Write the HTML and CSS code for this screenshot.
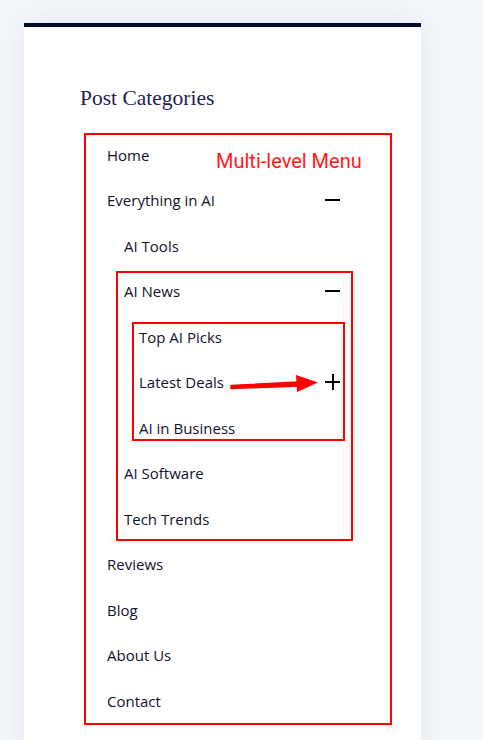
FILE: index.html
```html
<!DOCTYPE html>
<html lang="en">
<head>
<meta charset="utf-8">
<title>Post Categories</title>
<link rel="stylesheet" href="styles.css">
</head>
<body>
<div class="card">
  <h2 class="title">Post Categories</h2>
  <nav class="menu-wrap">
    <span class="note">Multi-level Menu</span>
    <ul class="menu">
      <li><div class="row">Home</div></li>
      <li>
        <div class="row">Everything in AI<span class="toggle minus"></span></div>
        <ul class="sub lvl2">
          <li><div class="row">AI Tools</div></li>
          <li class="boxed-a">
            <div class="row">AI News<span class="toggle minus"></span></div>
            <ul class="sub lvl3 boxed-b">
              <li><div class="row">Top AI Picks</div></li>
              <li>
                <div class="row">Latest Deals<span class="toggle plus"></span></div>
                <svg class="arrow" width="92" height="22" viewBox="0 0 92 22">
                  <path d="M2 13.5 L70 10 L70 14 L2 16.5 Z" fill="#ff0000" stroke="#ff0000" stroke-width="1.5" stroke-linejoin="round"/>
                  <path d="M67 3 L89 10.5 L68 20 Z" fill="#ff0000"/>
                </svg>
              </li>
              <li><div class="row">AI in Business</div></li>
            </ul>
            <ul class="sub lvl2b">
              <li><div class="row">AI Software</div></li>
              <li><div class="row">Tech Trends</div></li>
            </ul>
          </li>
        </ul>
      </li>
      <li><div class="row">Reviews</div></li>
      <li><div class="row">Blog</div></li>
      <li><div class="row">About Us</div></li>
      <li><div class="row">Contact</div></li>
    </ul>
  </nav>
</div>
</body>
</html>
```

FILE: styles.css
```css
html, body {
  margin: 0;
  padding: 0;
  background: #f4f7fb;
}

body {
  padding: 23px 0 0 24px;
  height: 740px;
  box-sizing: border-box;
  overflow: hidden;
}

.card {
  width: 397px;
  min-height: 760px;
  background: #ffffff;
  border-top: 4px solid #030a2b;
  box-shadow: 0 0 30px rgba(20, 40, 80, 0.07);
  padding: 59px 29px 0 56px;
  box-sizing: border-box;
}

.title {
  margin: 0 0 22px 0;
  font-family: "Liberation Serif", "DejaVu Serif", serif;
  font-weight: normal;
  font-size: 21.5px;
  line-height: 25px;
  color: #24214f;
}

.menu-wrap {
  position: relative;
  margin-left: 4px;
  width: 308px;
}

.menu {
  list-style: none;
  margin: 0;
  padding: 0;
  outline: 2px solid #ff0000;
  outline-offset: -2px;
}

.sub {
  list-style: none;
  margin: 0;
  padding: 0;
}

.row {
  height: 45.5px;
  display: flex;
  align-items: center;
  justify-content: space-between;
  padding: 0 51px 2px 23px;
  font-family: "Open Sans", "Noto Sans", sans-serif;
  font-size: 15px;
  color: #12122a;
  box-sizing: border-box;
}

.lvl2 .row, .lvl2b .row {
  padding-left: 40px;
}

.lvl3 .row {
  padding-left: 55px;
}

.toggle {
  position: relative;
  width: 16px;
  height: 16px;
  flex: none;
}

.toggle::before {
  content: "";
  position: absolute;
  left: 0;
  right: 1px;
  top: 7px;
  height: 2px;
  background: #000;
}

.plus::after {
  content: "";
  position: absolute;
  top: 0;
  bottom: 0;
  left: 7px;
  width: 2px;
  background: #000;
}

.boxed-a, .boxed-b, .lvl3 li {
  position: relative;
}

.boxed-a::after {
  content: "";
  position: absolute;
  left: 32px;
  right: 39px;
  top: 1.5px;
  bottom: 1.5px;
  border: 2px solid #ff0000;
  pointer-events: none;
}

.boxed-b::after {
  content: "";
  position: absolute;
  left: 48px;
  right: 47px;
  top: 6.5px;
  bottom: 10.5px;
  border: 2px solid #ff0000;
  pointer-events: none;
}

.note {
  position: absolute;
  left: 132px;
  top: 17px;
  font-family: Roboto, "Liberation Sans", sans-serif;
  font-size: 20px;
  line-height: 22px;
  color: #ff1a1a;
  z-index: 1;
}

.arrow {
  position: absolute;
  left: 145px;
  top: 11px;
}
```
